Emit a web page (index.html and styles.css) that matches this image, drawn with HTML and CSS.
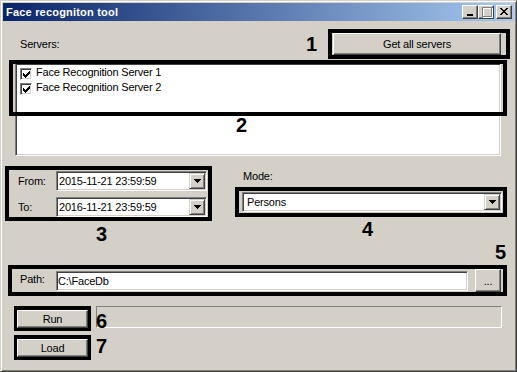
FILE: index.html
```html
<!DOCTYPE html>
<html>
<head>
<meta charset="utf-8">
<title>Face recogniton tool</title>
<link rel="stylesheet" href="styles.css">
</head>
<body>
<div class="window">
  <div class="titlebar">
    <span class="title">Face recogniton tool</span>
    <div class="tb-buttons">
      <span class="tb-btn"><svg width="14" height="12" shape-rendering="crispEdges"><rect x="4" y="8" width="6" height="2" fill="#000"/></svg></span>
      <span class="tb-btn"><svg width="14" height="12" shape-rendering="crispEdges"><rect x="4" y="2" width="9" height="9" fill="none" stroke="#fff"/><rect x="3" y="1" width="9" height="9" fill="none" stroke="#808080"/><rect x="3" y="1" width="9" height="1" fill="#808080"/></svg></span>
      <span class="tb-btn tb-close"><svg width="14" height="12" shape-rendering="crispEdges"><g fill="#000" transform="translate(3 2)"><rect x="0" y="0" width="2" height="1"/><rect x="6" y="0" width="2" height="1"/><rect x="1" y="1" width="2" height="1"/><rect x="5" y="1" width="2" height="1"/><rect x="2" y="2" width="4" height="1"/><rect x="3" y="3" width="2" height="1"/><rect x="2" y="4" width="4" height="1"/><rect x="1" y="5" width="2" height="1"/><rect x="5" y="5" width="2" height="1"/><rect x="0" y="6" width="2" height="1"/><rect x="6" y="6" width="2" height="1"/></g></svg></span>
    </div>
  </div>

  <div class="client">
    <div class="row-servers">
      <span class="lbl lbl-servers">Servers:</span>
      <span class="num num-1">1</span>
      <div class="mark mark-getall"><button class="btn btn-getall">Get all servers</button></div>
    </div>

    <div class="listbox sunken">
      <div class="list-item">
        <span class="check sunken"><svg width="7" height="7" shape-rendering="crispEdges"><g fill="#000"><rect x="0" y="2" width="1" height="3"/><rect x="1" y="3" width="1" height="3"/><rect x="2" y="4" width="1" height="3"/><rect x="3" y="3" width="1" height="3"/><rect x="4" y="2" width="1" height="3"/><rect x="5" y="1" width="1" height="3"/><rect x="6" y="0" width="1" height="3"/></g></svg></span>
        <span>Face Recognition Server 1</span>
      </div>
      <div class="list-item">
        <span class="check sunken"><svg width="7" height="7" shape-rendering="crispEdges"><g fill="#000"><rect x="0" y="2" width="1" height="3"/><rect x="1" y="3" width="1" height="3"/><rect x="2" y="4" width="1" height="3"/><rect x="3" y="3" width="1" height="3"/><rect x="4" y="2" width="1" height="3"/><rect x="5" y="1" width="1" height="3"/><rect x="6" y="0" width="1" height="3"/></g></svg></span>
        <span>Face Recognition Server 2</span>
      </div>
      <div class="mark-list"></div>
      <span class="num num-2">2</span>
    </div>

    <div class="row-time">
      <div class="col-dates">
        <div class="mark mark-dates">
          <span class="lbl">From:</span>
          <div class="combo sunken"><span class="val">2015-11-21 23:59:59</span><span class="ddbtn"><svg width="7" height="4" shape-rendering="crispEdges"><g fill="#000"><rect x="0" y="0" width="7" height="1"/><rect x="1" y="1" width="5" height="1"/><rect x="2" y="2" width="3" height="1"/><rect x="3" y="3" width="1" height="1"/></g></svg></span></div>
          <span class="lbl">To:</span>
          <div class="combo sunken"><span class="val">2016-11-21 23:59:59</span><span class="ddbtn"><svg width="7" height="4" shape-rendering="crispEdges"><g fill="#000"><rect x="0" y="0" width="7" height="1"/><rect x="1" y="1" width="5" height="1"/><rect x="2" y="2" width="3" height="1"/><rect x="3" y="3" width="1" height="1"/></g></svg></span></div>
        </div>
        <span class="num num-3">3</span>
      </div>
      <div class="col-mode">
        <span class="lbl lbl-mode">Mode:</span>
        <div class="mark mark-mode">
          <div class="combo combo-mode sunken"><span class="val">Persons</span><span class="ddbtn"><svg width="7" height="4" shape-rendering="crispEdges"><g fill="#000"><rect x="0" y="0" width="7" height="1"/><rect x="1" y="1" width="5" height="1"/><rect x="2" y="2" width="3" height="1"/><rect x="3" y="3" width="1" height="1"/></g></svg></span></div>
        </div>
        <span class="num num-4">4</span>
      </div>
    </div>

    <div class="num num-5">5</div>

    <div class="mark mark-path">
      <span class="lbl lbl-path">Path:</span>
      <div class="textbox sunken">C:\FaceDb</div>
      <button class="btn btn-browse">...</button>
    </div>

    <div class="row-run">
      <div class="mark mark-btn"><button class="btn btn-fill">Run</button></div>
      <div class="progress"><span class="num num-6">6</span></div>
    </div>

    <div class="row-load">
      <div class="mark mark-btn"><button class="btn btn-fill">Load</button></div>
      <span class="num num-7">7</span>
    </div>
  </div>
</div>
</body>
</html>
```

FILE: styles.css
```css
* { box-sizing: border-box; }
html, body { margin: 0; padding: 0; }
body {
  width: 517px;
  height: 372px;
  overflow: hidden;
  background: #d4d0c8;
  font-family: "Liberation Sans", Arial, sans-serif;
  font-size: 11px;
  letter-spacing: -0.2px;
  color: #000;
}

.window {
  width: 517px;
  height: 372px;
  border: 1px solid;
  border-color: #d4d0c8 #404040 #404040 #d4d0c8;
  box-shadow: inset 1px 1px #fff, inset -1px -1px #808080;
  padding: 2px;
  display: flex;
  flex-direction: column;
}

/* title bar */
.titlebar {
  flex: none;
  height: 18px;
  display: flex;
  align-items: flex-start;
  padding-left: 3px;
  background: linear-gradient(to right, #0a246a, #a6caf0);
}
.title {
  flex: 1;
  color: #fff;
  font-weight: bold;
  line-height: 18px;
  letter-spacing: 0.2px;
}
.tb-buttons { display: flex; margin-top: 2px; margin-right: 2px; }
.tb-btn {
  width: 16px;
  height: 14px;
  background: #d4d0c8;
  border: 1px solid;
  border-color: #fff #404040 #404040 #fff;
  box-shadow: inset -1px -1px #808080;
  display: flex;
}
.tb-btn svg { display: block; }
.tb-close { margin-left: 2px; }

/* shared widgets */
.sunken {
  border: 1px solid;
  border-color: #808080 #fff #fff #808080;
  box-shadow: inset 1px 1px #404040, inset -1px -1px #d4d0c8;
}
.btn {
  font: inherit;
  letter-spacing: inherit;
  color: #000;
  margin: 0;
  padding: 0;
  border-radius: 0;
  background: #d4d0c8;
  border: 1px solid;
  border-color: #fff #404040 #404040 #fff;
  box-shadow: inset -1px -1px #808080;
  display: flex;
  align-items: center;
  justify-content: center;
}
.lbl { line-height: 13px; }
.num {
  font-weight: bold;
  font-size: 20px;
  line-height: 16px;
  letter-spacing: 0;
}
.mark { border: 4px solid #000; }

.client { flex: 1; display: flex; flex-direction: column; }

/* servers row */
.row-servers {
  display: flex;
  align-items: center;
  height: 30px;
  margin-top: 8px;
}
.lbl-servers { margin-left: 17px; }
.num-1 { margin-left: auto; margin-right: 11px; }
.mark-getall {
  width: 182px;
  height: 30px;
  margin-right: 4px;
  padding: 0 5px 0 1px;
  display: flex;
}
.btn-getall { width: 168px; height: 22px; }

/* list */
.listbox {
  position: relative;
  margin: 4px 0 0 12px;
  width: 486px;
  height: 93px;
  background: #fff;
  padding: 1px 0 0 4px;
}
.list-item {
  display: flex;
  align-items: flex-start;
  height: 15px;
  line-height: 15px;
}
.check {
  width: 12px;
  height: 12px;
  margin-top: 3px;
  margin-right: 4px;
  background: #fff;
  display: flex;
  align-items: center;
  justify-content: center;
}
.check svg { display: block; }
.mark-list {
  position: absolute;
  left: -7px;
  top: -4px;
  width: 498px;
  height: 56px;
  border: 4px solid #000;
}
.num-2 { position: absolute; left: 220px; top: 53px; }

/* dates + mode */
.row-time { display: flex; align-items: flex-start; margin-top: 10px; }
.col-dates { margin-left: 2px; display: flex; flex-direction: column; align-items: flex-start; }
.mark-dates {
  width: 207px;
  height: 55px;
  padding: 1px 1px 0 9px;
  display: grid;
  grid-template-columns: 38px 151px;
  row-gap: 6px;
  align-items: center;
}
.combo {
  height: 20px;
  background: #fff;
  display: flex;
  align-items: center;
  padding: 1px;
}
.combo .val { flex: 1; padding-left: 1px; line-height: 16px; }
.ddbtn {
  width: 16px;
  height: 16px;
  background: #d4d0c8;
  border: 1px solid;
  border-color: #d4d0c8 #404040 #404040 #d4d0c8;
  box-shadow: inset 1px 1px #fff, inset -1px -1px #808080;
  display: flex;
  align-items: center;
  justify-content: center;
}
.ddbtn svg { display: block; }
.num-3 { margin-top: 5px; margin-left: 91px; }

.col-mode { margin-left: 23px; width: 272px; display: flex; flex-direction: column; align-items: flex-start; }
.lbl-mode { margin-top: 4px; margin-left: 8px; }
.mark-mode {
  margin-top: 4px;
  width: 272px;
  height: 30px;
  padding: 1px 1px 1px 3px;
}
.combo-mode { width: 260px; }
.combo-mode .val { padding-left: 3px; }
.num-4 { margin-top: 4px; margin-left: 127px; }

/* path */
.num-5 { margin-top: 2px; margin-right: 8px; text-align: right; }
.mark-path {
  margin: 5px 0 0 5px;
  width: 499px;
  height: 31px;
  padding: 0 2px 0 8px;
  display: flex;
  align-items: center;
}
.lbl-path { width: 36px; margin-top: -3px; }
.textbox {
  width: 412px;
  height: 20px;
  background: #fff;
  padding: 0 2px 0 1px;
  line-height: 18px;
}
.btn-browse { width: 26px; height: 23px; margin-left: 7px; }

/* run / load */
.row-run { display: flex; margin-top: 10px; }
.row-load { display: flex; align-items: flex-start; margin-top: 4px; }
.mark-btn {
  margin-left: 11px;
  width: 77px;
  height: 25px;
  border-width: 4px 3px 3px 3px;
  display: flex;
}
.btn-fill { width: 71px; height: 18px; }
.progress {
  position: relative;
  margin-left: 5px;
  width: 406px;
  height: 22px;
  border: 1px solid;
  border-color: #808080 #fff #fff #808080;
}
.num-6 { position: absolute; left: -1px; top: 6px; }
.num-7 { margin-left: 5px; margin-top: 3px; }
```
